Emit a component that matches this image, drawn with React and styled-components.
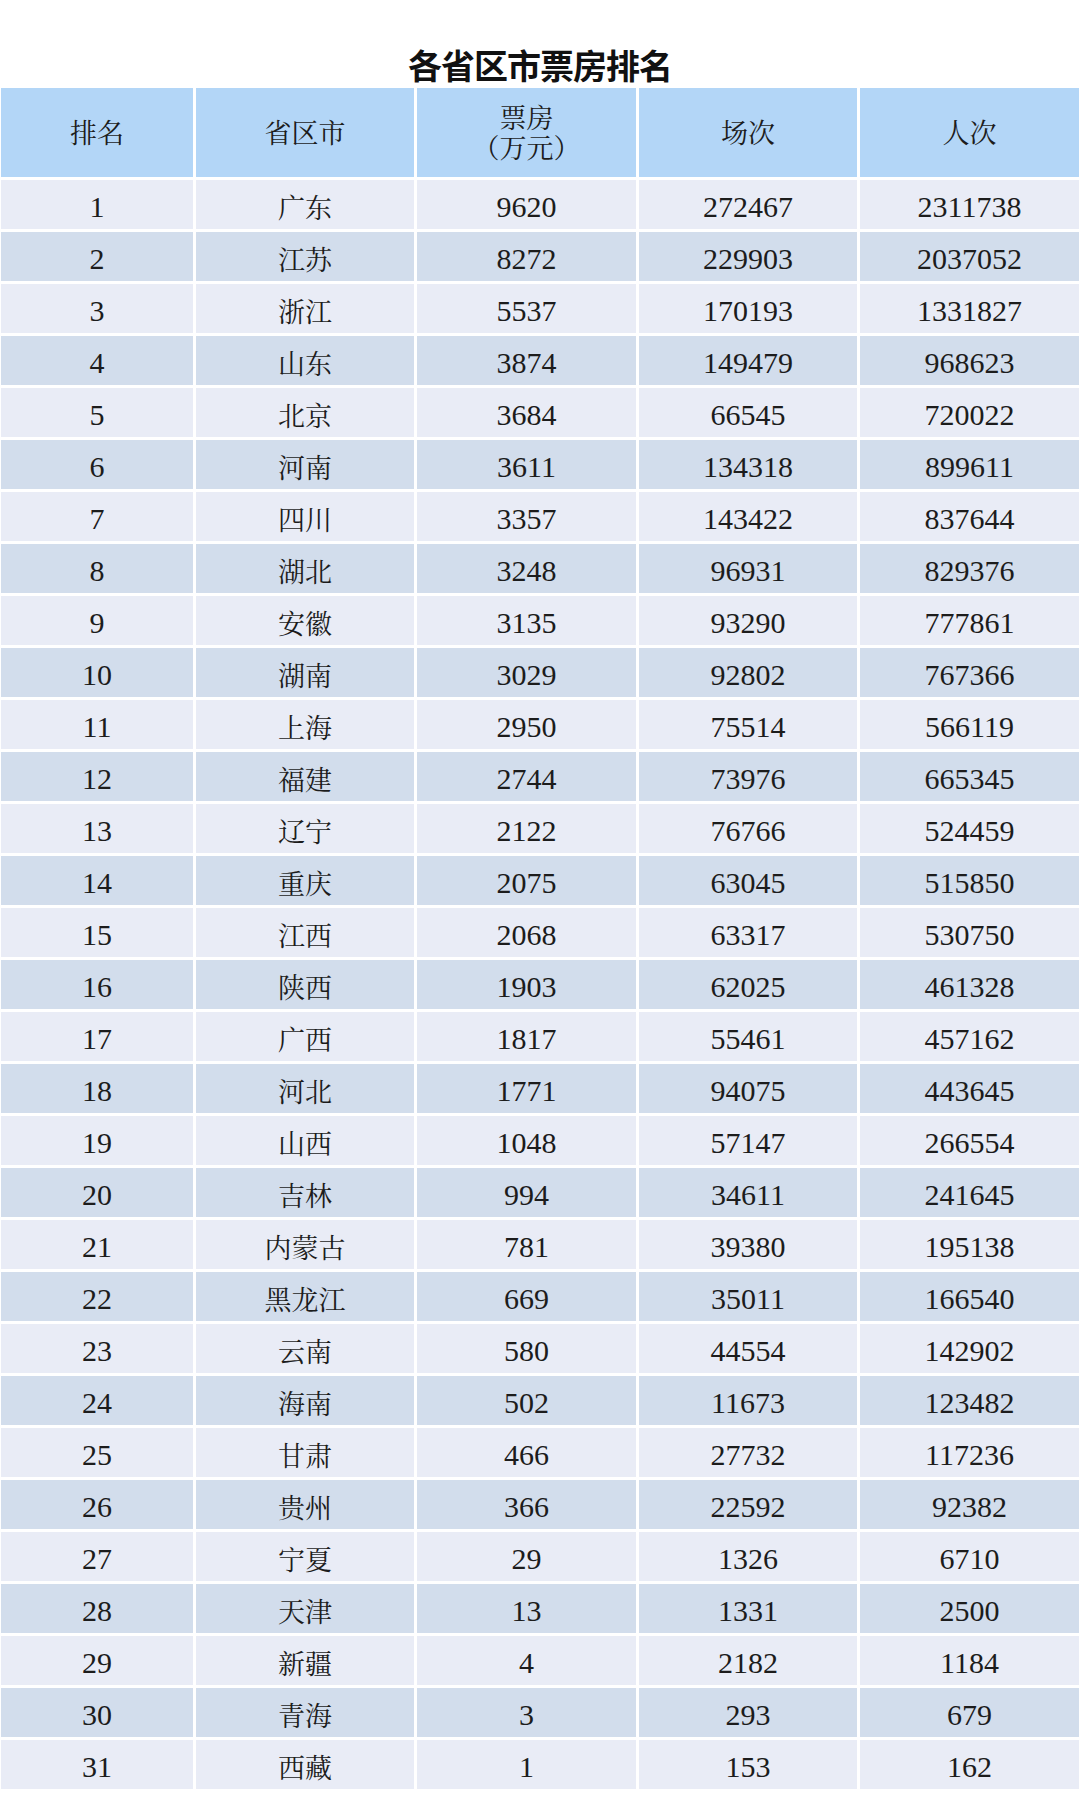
import React from 'react';
import styled, { createGlobalStyle } from 'styled-components';

const GlobalStyle = createGlobalStyle`
  html, body {
    margin: 0;
    padding: 0;
    background: #ffffff;
  }
`;

const Page = styled.div`
  width: 1080px;
  min-height: 1800px;
  background: #ffffff;
  box-sizing: border-box;
  padding: 0 1px;
`;

const Title = styled.h1`
  margin: 0;
  padding-top: 48px;
  height: 88px;
  box-sizing: border-box;
  text-align: center;
  font-family: "Noto Sans CJK SC", "Noto Sans", sans-serif;
  font-weight: 700;
  font-size: 34px;
  line-height: 34px;
  color: #111111;
  letter-spacing: -1px;
`;

const Table = styled.div`
  display: grid;
  grid-template-columns: 192fr 218fr 219fr 218fr 219fr;
  grid-auto-rows: 49px;
  grid-template-rows: 89px;
  gap: 3px;
`;

const HeadCell = styled.div`
  background: #b3d6f7;
  display: flex;
  flex-direction: column;
  align-items: center;
  justify-content: center;
  font-family: "Liberation Serif", "Noto Serif CJK SC", "Noto Sans CJK SC", serif;
  font-size: 27px;
  line-height: 30px;
  color: #1c1c1c;
  padding-top: 2px;
`;

const Cell = styled.div`
  background: ${p => (p.$even ? '#d2ddec' : '#e9ecf6')};
  display: flex;
  align-items: center;
  justify-content: center;
  font-family: "Liberation Serif", "Noto Serif CJK SC", "Noto Sans CJK SC", serif;
  font-size: ${p => (p.$cjk ? '27px' : '30px')};
  color: #1c1c1c;
  padding-top: 4px;
  box-sizing: border-box;
`;

const rows = [
  ['广东', 9620, 272467, 2311738],
  ['江苏', 8272, 229903, 2037052],
  ['浙江', 5537, 170193, 1331827],
  ['山东', 3874, 149479, 968623],
  ['北京', 3684, 66545, 720022],
  ['河南', 3611, 134318, 899611],
  ['四川', 3357, 143422, 837644],
  ['湖北', 3248, 96931, 829376],
  ['安徽', 3135, 93290, 777861],
  ['湖南', 3029, 92802, 767366],
  ['上海', 2950, 75514, 566119],
  ['福建', 2744, 73976, 665345],
  ['辽宁', 2122, 76766, 524459],
  ['重庆', 2075, 63045, 515850],
  ['江西', 2068, 63317, 530750],
  ['陕西', 1903, 62025, 461328],
  ['广西', 1817, 55461, 457162],
  ['河北', 1771, 94075, 443645],
  ['山西', 1048, 57147, 266554],
  ['吉林', 994, 34611, 241645],
  ['内蒙古', 781, 39380, 195138],
  ['黑龙江', 669, 35011, 166540],
  ['云南', 580, 44554, 142902],
  ['海南', 502, 11673, 123482],
  ['甘肃', 466, 27732, 117236],
  ['贵州', 366, 22592, 92382],
  ['宁夏', 29, 1326, 6710],
  ['天津', 13, 1331, 2500],
  ['新疆', 4, 2182, 1184],
  ['青海', 3, 293, 679],
  ['西藏', 1, 153, 162],
];

const App = () => {
  return (
    <>
      <GlobalStyle />
      <Page>
        <Title>各省区市票房排名</Title>
        <Table>
          <HeadCell>排名</HeadCell>
          <HeadCell>省区市</HeadCell>
          <HeadCell>
            <span>票房</span>
            <span>（万元）</span>
          </HeadCell>
          <HeadCell>场次</HeadCell>
          <HeadCell>人次</HeadCell>
          {rows.map((r, i) => {
            const even = i % 2 === 1;
            return (
              <React.Fragment key={i}>
                <Cell $even={even}>{i + 1}</Cell>
                <Cell $even={even} $cjk>{r[0]}</Cell>
                <Cell $even={even}>{r[1]}</Cell>
                <Cell $even={even}>{r[2]}</Cell>
                <Cell $even={even}>{r[3]}</Cell>
              </React.Fragment>
            );
          })}
        </Table>
      </Page>
    </>
  );
};

export default App;
